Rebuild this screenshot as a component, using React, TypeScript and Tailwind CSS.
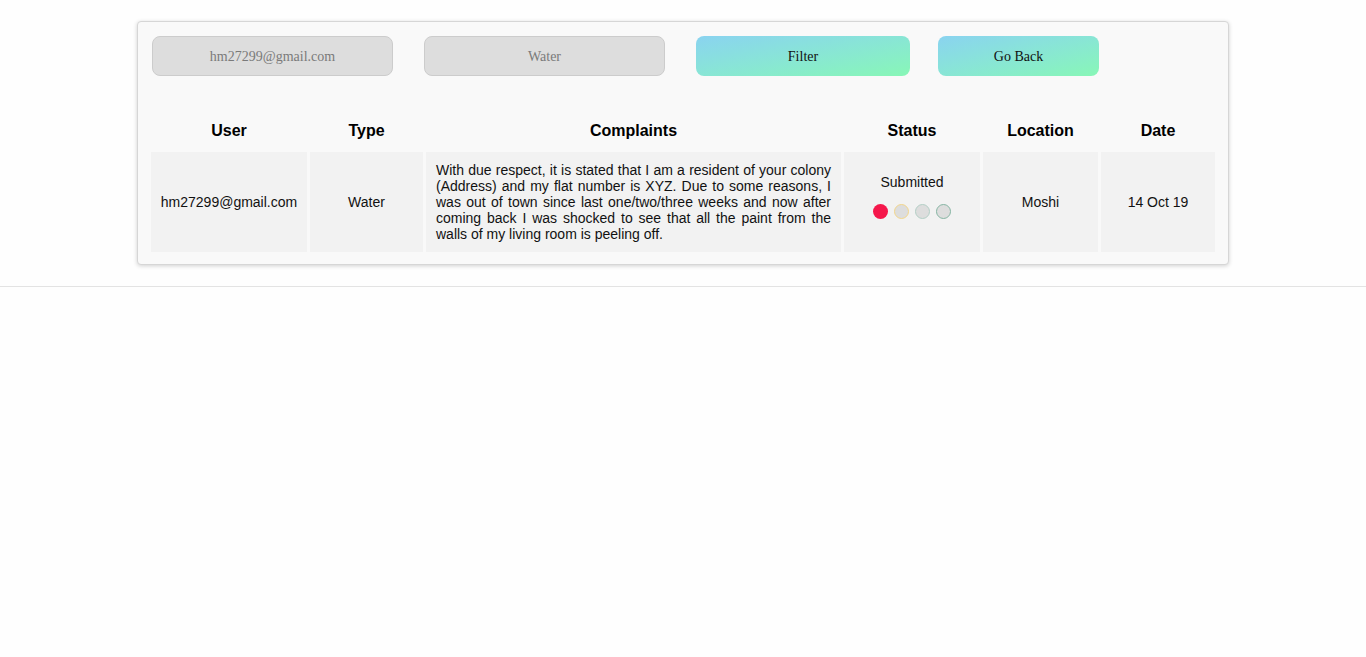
import React from 'react';

const complaint =
  'With due respect, it is stated that I am a resident of your colony (Address) and my flat number is XYZ. Due to some reasons, I was out of town since last one/two/three weeks and now after coming back I was shocked to see that all the paint from the walls of my living room is peeling off.';

export default function App() {
  return (
    <div className="min-h-screen bg-[#fefefe] pt-[21px] font-['Liberation_Sans',Arial,sans-serif]">
      <div className="mx-auto w-[1092px] rounded-[4px] border border-[#d6d6d6] bg-[#f9f9f9] px-[10px] pb-[9px] pt-[14px] shadow-[0_1px_4px_rgba(0,0,0,0.18)]">
        {/* Filters */}
        <div className="flex items-center pl-[4px] font-['Liberation_Serif','Times_New_Roman',serif] text-[14px]">
          <input
            readOnly
            value="hm27299@gmail.com"
            className="h-[40px] w-[241px] rounded-[8px] border border-[#cccccc] bg-[#dddddd] pt-[2px] text-center text-[#7a7a7a] outline-none"
          />
          <input
            readOnly
            value="Water"
            className="ml-[31px] h-[40px] w-[241px] rounded-[8px] border border-[#cccccc] bg-[#dddddd] pt-[2px] text-center text-[#7a7a7a] outline-none"
          />
          <button className="ml-[31px] h-[40px] w-[214px] rounded-[8px] bg-gradient-to-br from-[#8ad3f0] to-[#88f7b6] text-[#111]">
            Filter
          </button>
          <button className="ml-[28px] h-[40px] w-[161px] rounded-[8px] bg-gradient-to-br from-[#8ad3f0] to-[#88f7b6] text-[#111]">
            Go Back
          </button>
        </div>

        {/* Complaints table */}
        <table className="mt-[31px] border-separate border-spacing-[3px] text-[14px] text-[#111]">
          <thead>
            <tr className="text-[16px] font-bold text-black">
              <th className="h-[39px] w-[156px] pt-[2px] font-bold">User</th>
              <th className="w-[113px] pt-[2px] font-bold">Type</th>
              <th className="w-[415px] pt-[2px] font-bold">Complaints</th>
              <th className="w-[136px] pt-[2px] font-bold">Status</th>
              <th className="w-[115px] pt-[2px] font-bold">Location</th>
              <th className="w-[114px] pt-[2px] font-bold">Date</th>
            </tr>
          </thead>
          <tbody>
            <tr>
              <td className="h-[100px] bg-[#f2f2f2] text-center">hm27299@gmail.com</td>
              <td className="bg-[#f2f2f2] text-center">Water</td>
              <td className="bg-[#f2f2f2] px-[10px] text-justify leading-[16px]">{complaint}</td>
              <td className="bg-[#f2f2f2] pb-[13px] text-center">
                <div>Submitted</div>
                <div className="mt-[11px] flex justify-center gap-[6px]">
                  <span className="h-[15px] w-[15px] rounded-full bg-[#f5174b]" />
                  <span className="h-[15px] w-[15px] rounded-full border border-[#f3d68a] bg-[#dddddd]" />
                  <span className="h-[15px] w-[15px] rounded-full border border-[#b3cfc6] bg-[#dddddd]" />
                  <span className="h-[15px] w-[15px] rounded-full border border-[#86b5a3] bg-[#dddddd]" />
                </div>
              </td>
              <td className="bg-[#f2f2f2] text-center">Moshi</td>
              <td className="bg-[#f2f2f2] text-center">14 Oct 19</td>
            </tr>
          </tbody>
        </table>
      </div>
      <div className="mt-[21px] h-px bg-[#e3e3e3]" />
    </div>
  );
}
